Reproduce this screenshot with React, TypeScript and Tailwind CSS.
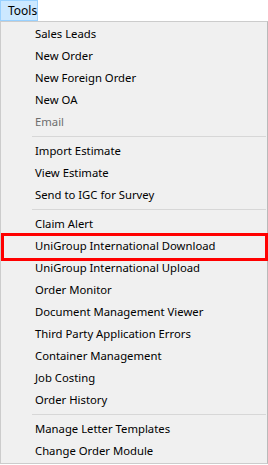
const groups: { label: string; disabled?: boolean; selected?: boolean }[][] = [
  [
    { label: 'Sales Leads' },
    { label: 'New Order' },
    { label: 'New Foreign Order' },
    { label: 'New OA' },
    { label: 'Email', disabled: true },
  ],
  [
    { label: 'Import Estimate' },
    { label: 'View Estimate' },
    { label: 'Send to IGC for Survey' },
  ],
  [
    { label: 'Claim Alert' },
    { label: 'UniGroup International Download', selected: true },
    { label: 'UniGroup International Upload' },
    { label: 'Order Monitor' },
    { label: 'Document Management Viewer' },
    { label: 'Third Party Application Errors' },
    { label: 'Container Management' },
    { label: 'Job Costing' },
    { label: 'Order History' },
  ],
  [
    { label: 'Manage Letter Templates' },
    { label: 'Change Order Module' },
  ],
];

const App = () => {
  return (
    <div className="w-[268px] h-[465px] bg-white overflow-hidden text-[11.3px] leading-none text-black" style={{ fontFamily: '"Segoe UI", "Noto Sans", sans-serif' }}>
      {/* Menu bar */}
      <div className="h-[21px] flex">
        <div className="w-[38px] h-[21px] bg-[#cce8ff] border border-[#99d1ff] flex items-center pl-[7px] text-[12px]">
          Tools
        </div>
      </div>

      {/* Dropdown */}
      <div className="w-[268px] h-[443px] bg-[#f0f0f0] border border-[#cccccc] border-r-[#b9b9b9] pt-[1px]">
        {groups.map((group, gi) => (
          <div key={gi}>
            {gi > 0 && (
              <div className="h-[7px] flex items-center pl-[31px] pr-[1px]">
                <div className="h-px w-full bg-[#d7d7d7]" />
              </div>
            )}
            {group.map((item) => (
              <div key={item.label} className="relative h-[22px] flex items-center pl-[34px]">
                <span className={item.disabled ? 'text-[#6d6d6d]' : ''}>{item.label}</span>
                {item.selected && (
                  <div className="absolute left-0 -right-px -top-[2px] h-[28px] border-[3px] border-[#ff0000]" />
                )}
              </div>
            ))}
          </div>
        ))}
      </div>
    </div>
  );
};

export default App;
